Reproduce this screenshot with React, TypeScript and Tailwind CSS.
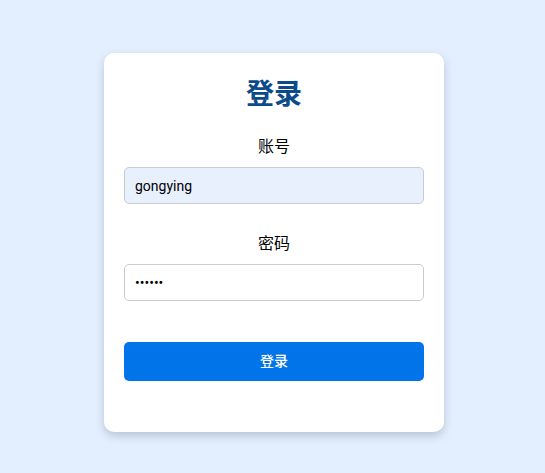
import React from "react";

export default function App() {
  return (
    <div
      className="min-h-[473px] w-full bg-[#e3efff] flex justify-center pt-[53px] pl-[3px]"
      style={{ fontFamily: 'Roboto, "Noto Sans CJK SC", sans-serif' }}
    >
      <div className="w-[340px] h-[379px] bg-white rounded-[10px] shadow-[0_4px_10px_rgba(0,0,0,0.18)] px-[20px] pt-[21px] flex flex-col">
        <h1 className="text-center text-[28px] leading-[42px] font-bold text-[#0b4a8b]">登录</h1>
        <label className="mt-[19px] text-center text-[16px] leading-[24px] text-black">账号</label>
        <input
          type="text"
          defaultValue="gongying"
          className="mt-[8px] h-[37px] w-full rounded-[5px] border border-[#c8cbd0] bg-[#e8f0fe] px-[10px] text-[14px] text-black outline-none"
        />
        <label className="mt-[28px] text-center text-[16px] leading-[24px] text-black">密码</label>
        <input
          type="password"
          defaultValue="123456"
          className="mt-[8px] h-[37px] w-full rounded-[5px] border border-[#c8cbd0] bg-white px-[10px] text-[14px] text-black outline-none"
        />
        <button className="mt-[41px] h-[39px] w-full rounded-[5px] bg-[#0074e8] text-white text-[14px] font-medium">
          登录
        </button>
      </div>
    </div>
  );
}
